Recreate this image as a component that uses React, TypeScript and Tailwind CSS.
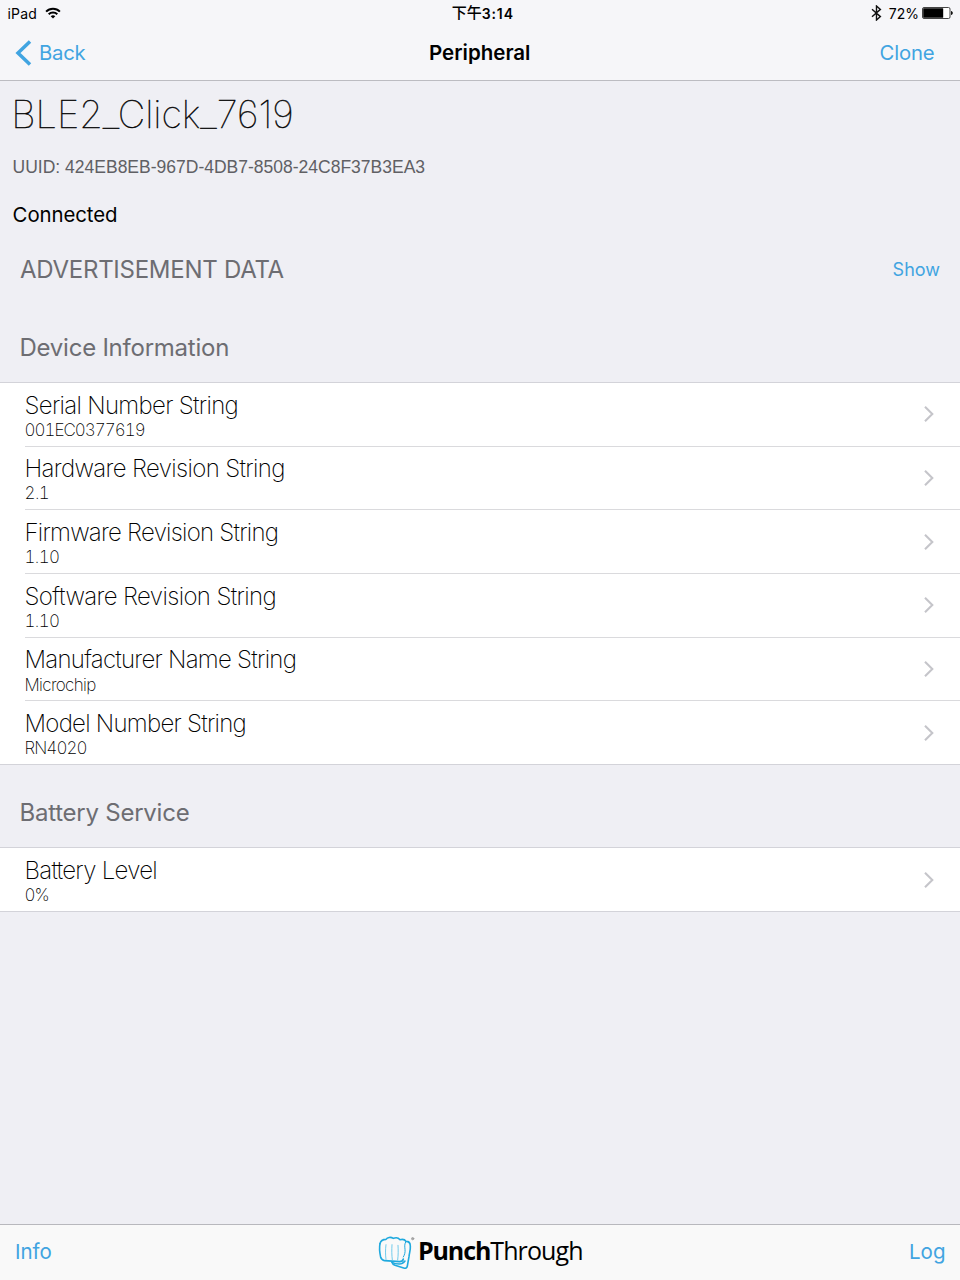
type Item = { title: string; value: string; titleClass: string; valueClass: string };

const deviceInformation: Item[] = [
  { title: "Serial Number String", value: "001EC0377619", titleClass: "tracking-[-0.68px]", valueClass: "tracking-[-1px]" },
  { title: "Hardware Revision String", value: "2.1", titleClass: "tracking-[-0.65px]", valueClass: "tracking-[-0.6px]" },
  { title: "Firmware Revision String", value: "1.10", titleClass: "tracking-[-0.76px]", valueClass: "tracking-[-0.7px]" },
  { title: "Software Revision String", value: "1.10", titleClass: "tracking-[-0.63px]", valueClass: "tracking-[-0.7px]" },
  { title: "Manufacturer Name String", value: "Microchip", titleClass: "tracking-[-0.73px]", valueClass: "tracking-[-0.65px]" },
  { title: "Model Number String", value: "RN4020", titleClass: "tracking-[-0.73px]", valueClass: "tracking-[-0.9px]" },
];

const batteryService: Item[] = [
  { title: "Battery Level", value: "0%", titleClass: "tracking-[-0.72px]", valueClass: "tracking-[-1px]" },
];

function WifiIcon() {
  return (
    <svg className="h-[12px] w-[16px]" viewBox="0 0 16 12" fill="none" stroke="#000" strokeWidth="2">
      <path d="M1.1 4.6a9.8 9.8 0 0 1 13.8 0" />
      <path d="M3.7 7.3a6.1 6.1 0 0 1 8.6 0" />
      <path d="M8 11.6 5.7 9.3a3.3 3.3 0 0 1 4.6 0Z" fill="#000" stroke="none" />
    </svg>
  );
}

function BluetoothIcon() {
  return (
    <svg className="h-[16px] w-[11px]" viewBox="0 0 11 16" fill="none" stroke="#111" strokeWidth="1.4">
      <path d="M1 4.3 9.4 11.6 5.5 15V1l3.9 3.4L1 11.7" />
    </svg>
  );
}

function BatteryIcon() {
  return (
    <svg className="h-[12px] w-[31px]" viewBox="0 0 31 12">
      <rect x="0.5" y="0.5" width="27.5" height="11" rx="1.5" fill="#fff" stroke="#444" />
      <rect x="1.2" y="1.2" width="20" height="9.6" rx="0.5" fill="#000" />
      <path d="M29 4c2.4.4 2.4 3.6 0 4Z" fill="#111" />
    </svg>
  );
}

function Chevron() {
  return (
    <svg className="h-[18px] w-[12px]" viewBox="0 0 12 18" fill="none" stroke="#c5c5ca" strokeWidth="2.1">
      <path d="m2 1.8 7.3 7.2L2 16.2" />
    </svg>
  );
}

function FistLogo() {
  return (
    <svg className="h-[36px] w-[40px]" viewBox="7 4 120 108" fill="none" stroke="#1fa9de" strokeWidth="4.8" strokeLinejoin="round" strokeLinecap="round">
      <path d="M13 30c2-9 8-13 18-13 4-6 14-8 22-3 8-3 16-1 20 4 8-2 15 0 18 5 9 0 13 5 13 14 1 12-3 21-4 32l-5 28c-1 6-5 8-11 6L58 95c-5-2-8-5-9-9" />
      <path d="M13 30c-3 14-1 27 2 41 2 7 6 9 12 10l45 3c7 0 10-3 11-8" />
      <path d="M49 86c7 5 15 5 22 5 9 0 13-4 17-9" />
      <path d="M31 33c-2 15-2 30 0 44M49 33c-1 16-1 30 1 46M67 35c1 15 1 28-1 44" strokeWidth="2.5" stroke="#55c0e8" />
      <path d="M91 23c-5 8-4 15-3 24 1 9-1 16-5 23" strokeWidth="3" />
      <circle cx="111" cy="15" r="3.5" fill="#aaa" stroke="#999" strokeWidth="2" />
    </svg>
  );
}

function SectionHeader({ children }: { children: string }) {
  return (
    <h2 className="flex h-[30px] items-center pl-[19.5px] text-[24px] tracking-[-0.24px] text-[#6d6d72]">{children}</h2>
  );
}

function List({ items }: { items: Item[] }) {
  return (
    <ul className="border-t border-[#d3d3d9] bg-white">
      {items.map((item, i) => (
        <li key={item.title} className={i === items.length - 1 ? "border-b border-[#d3d3d9]" : ""}>
          <div className={i === items.length - 1 ? "flex h-[62.7px] pl-[25px]" : "ml-[25px] flex h-[63.7px] border-b border-[#dadadd]"}>
            <div className="-ml-[0.5px] flex-1 pt-[7.6px]">
              <div className={`h-[29.2px] text-[24px] leading-[30px] font-extralight text-black ${item.titleClass}`}>{item.title}</div>
              <div className={`text-[17px] leading-[20px] font-extralight text-black tabular-nums ${item.valueClass}`}>{item.value}</div>
            </div>
            <div className="pt-[22.4px] pr-[24.6px]">
              <Chevron />
            </div>
          </div>
        </li>
      ))}
    </ul>
  );
}

export default function App() {
  return (
    <div className="flex h-[1280px] w-[960px] flex-col overflow-hidden bg-[#efeff4] font-['Inter','Noto_Sans_CJK_TC',sans-serif] text-black">
      <header className="h-[81px] border-b border-[#bcbcc1] bg-[#f6f6f9]">
        <div className="grid h-[26px] grid-cols-3 items-center pr-[7px] pl-[7.5px] text-[14px]">
          <div className="flex items-center gap-[8px]">
            <span className="tracking-[0.2px]">iPad</span>
            <WifiIcon />
          </div>
          <div className="flex items-center justify-center pl-[5px] font-semibold">
            <span className="text-[15px] leading-[20px] font-medium">下午</span>
            <span className="tracking-[0.9px]">3:14</span>
          </div>
          <div className="flex items-center justify-end">
            <BluetoothIcon />
            <span className="ml-[7px]">72%</span>
            <span className="ml-[3px]"><BatteryIcon /></span>
          </div>
        </div>
        <div className="grid h-[54px] grid-cols-3 items-center pr-[25.5px] pl-[15px] text-[20.3px] text-[#41a4e1]">
          <button className="flex items-center gap-[7px] text-left tracking-[-0.25px]">
            <svg className="h-[26px] w-[17px]" viewBox="0 0 17 26" fill="none" stroke="currentColor" strokeWidth="3.5">
              <path d="M15 1.5 3 13l12 11.5" />
            </svg>
            Back
          </button>
          <h1 className="pl-[10px] text-center text-[20.5px] font-semibold text-black">Peripheral</h1>
          <button className="text-right tracking-[-0.15px]">Clone</button>
        </div>
      </header>

      <main className="flex-1">
        <section className="px-[12.6px] pt-[10px]">
          <div className="-ml-[1.3px] flex h-[46px] items-center text-[38px] font-thin [-webkit-text-stroke:0.4px_#000]">BLE2_Click_7619</div>
          <div className="mt-[18px] flex h-[24px] items-center font-['Liberation_Sans',sans-serif] text-[17.5px] text-[#606064]">
            UUID: 424EB8EB-967D-4DB7-8508-24C8F37B3EA3
          </div>
          <div className="mt-[22px] flex h-[28px] items-center text-[20.4px] tracking-[-0.08px]">Connected</div>
        </section>
        <div className="mt-[25px] flex items-center justify-between pr-[20px]">
          <h2 className="flex h-[30px] items-center pt-px pl-[20px] text-[24px] tracking-[-0.27px] text-[#6d6d72]">ADVERTISEMENT DATA</h2>
          <button className="text-[18px] text-[#41a4e1]">Show</button>
        </div>
        <div className="pt-[49px] pb-[19px]"><SectionHeader>Device Information</SectionHeader></div>
        <List items={deviceInformation} />
        <div className="pt-[33px] pb-[19px]"><SectionHeader>Battery Service</SectionHeader></div>
        <List items={batteryService} />
      </main>

      <footer className="grid h-[56px] grid-cols-[1fr_auto_1fr] items-center border-t border-[#b8b8bd] bg-[#f9f9f9] pr-[14.5px] pl-[15px] text-[20.5px] text-[#41a4e1]">
        <button className="text-left">Info</button>
        <div className="flex items-center">
          <FistLogo />
          <span className="flex pb-[5px] font-['Open_Sans',sans-serif] text-[25px] leading-[30px] text-black">
            <span className="font-bold tracking-[-1.1px]">Punch</span>
            <span className="tracking-[-0.9px]">Through</span>
          </span>
        </div>
        <button className="text-right">Log</button>
      </footer>
    </div>
  );
}
